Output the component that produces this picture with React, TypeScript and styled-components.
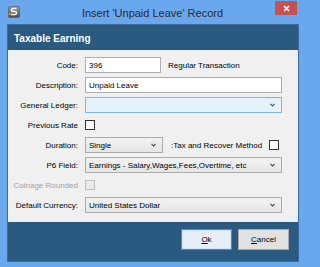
import React from "react";
import styled, { createGlobalStyle } from "styled-components";

const Global = createGlobalStyle`
  html, body { margin: 0; padding: 0; background: #69a8ec; }
  * { box-sizing: border-box; }
`;

const Window = styled.div`
  width: 305px;
  height: 267px;
  background: #69a8ec;
  display: flex;
  flex-direction: column;
  font-family: "Liberation Sans", Arial, sans-serif;
`;

const TitleBar = styled.div`
  height: 24px;
  display: grid;
  grid-template-columns: 1fr auto 1fr;
  align-items: center;
`;

const AppIcon = styled.svg`
  margin-left: 8px;
  margin-top: -1px;
  width: 12px;
  height: 12px;
`;

const Title = styled.div`
  font-size: 11px;
  color: #2b2b2b;
  white-space: nowrap;
  padding-top: 1px;
`;

const CloseButton = styled.div`
  justify-self: end;
  align-self: start;
  margin-top: 1px;
  margin-right: 8px;
  width: 22px;
  height: 14px;
  background: #c75050;
  display: flex;
  align-items: center;
  justify-content: center;
`;

const Dialog = styled.div`
  flex: 1;
  margin: 0 6px 5px 7px;
  border: 1px solid #3b6b98;
  display: flex;
  flex-direction: column;
`;

const Header = styled.div`
  height: 25px;
  background: #2a5a80;
  color: #ffffff;
  font-weight: bold;
  font-size: 10px;
  display: flex;
  align-items: center;
  padding-left: 6px;
  padding-top: 1px;
`;

const Form = styled.div`
  height: 172px;
  background: #f0f0f0;
  padding: 5px 16px 0 0;
  display: grid;
  grid-template-columns: 70px 1fr;
  grid-auto-rows: 20px;
  column-gap: 7px;
  font-size: 8px;
  align-items: center;
`;

const Label = styled.div<{ $disabled?: boolean }>`
  text-align: right;
  white-space: nowrap;
  color: ${(p) => (p.$disabled ? "#a3a3a3" : "#000")};
`;

const FieldRow = styled.div`
  display: flex;
  align-items: center;
  gap: 7px;
  height: 20px;
`;

const TextBox = styled.div<{ $w?: number }>`
  width: ${(p) => (p.$w ? `${p.$w}px` : "100%")};
  height: 16px;
  background: #fff;
  border: 1px solid #abadb3;
  display: flex;
  align-items: center;
  padding-left: 3px;
  color: #000;
  white-space: nowrap;
`;

const Combo = styled.div<{ $w?: number; $focus?: boolean }>`
  width: ${(p) => (p.$w ? `${p.$w}px` : "100%")};
  height: 16px;
  border: 1px solid ${(p) => (p.$focus ? "#7eb4ea" : "#acacac")};
  background: ${(p) =>
    p.$focus ? "#e5f1fb" : "linear-gradient(#f2f2f2, #e6e6e6)"};
  display: flex;
  align-items: center;
  justify-content: space-between;
  padding: 0 6px 0 3px;
  white-space: nowrap;
  color: #000;
`;

const Check = styled.div<{ $disabled?: boolean }>`
  width: 10px;
  height: 10px;
  flex: none;
  border: 1px solid ${(p) => (p.$disabled ? "#c2c2c2" : "#333")};
  background: ${(p) => (p.$disabled ? "#e9e9e9" : "#fff")};
`;

const Plain = styled.span`
  white-space: nowrap;
`;

const Footer = styled.div`
  flex: 1;
  background: #2a5a80;
  display: flex;
  justify-content: flex-end;
  align-items: flex-start;
  gap: 6px;
  padding: 7px 9px 0 0;
`;

const Button = styled.div<{ $default?: boolean }>`
  width: 51px;
  height: 21px;
  font-size: 8px;
  color: #000;
  display: flex;
  align-items: center;
  justify-content: center;
  border: 1px solid ${(p) => (p.$default ? "#3c90e0" : "#acacac")};
  background: ${(p) => (p.$default ? "#e8eef6" : "#e1e1e1")};
  box-shadow: ${(p) => (p.$default ? "inset 0 0 0 1px #cfe3f7" : "none")};
  u { text-decoration: underline; }
`;

const Chevron = () => (
  <svg width="5" height="4" viewBox="0 0 5 4">
    <polyline points="0.5,0.8 2.5,3 4.5,0.8" fill="none" stroke="#444" strokeWidth="1.1" />
  </svg>
);

export default function App() {
  return (
    <>
      <Global />
      <Window>
        <TitleBar>
          <AppIcon viewBox="0 0 12 12">
            <defs>
              <linearGradient id="ig" x1="0" y1="0" x2="0" y2="1">
                <stop offset="0" stopColor="#9a9a9a" />
                <stop offset="1" stopColor="#4a4a4a" />
              </linearGradient>
            </defs>
            <rect x="0.5" y="0.5" width="11" height="11" rx="1.5" fill="url(#ig)" stroke="#555" strokeWidth="0.6" />
            <rect x="0.8" y="7.2" width="5" height="2" fill="#f0881e" />
            <path d="M8.5 2.5 H5 Q3.5 2.5 3.5 4 Q3.5 5.5 5 5.5 H7 Q8.5 5.5 8.5 7 Q8.5 8.6 7 8.6 H3.5" fill="none" stroke="#fff" strokeWidth="1.4" />
          </AppIcon>
          <Title>Insert 'Unpaid Leave' Record</Title>
          <CloseButton>
            <svg width="7" height="7" viewBox="0 0 7 7">
              <path d="M1 1 L6 6 M6 1 L1 6" stroke="#fff" strokeWidth="1.6" />
            </svg>
          </CloseButton>
        </TitleBar>
        <Dialog>
          <Header>Taxable Earning</Header>
          <Form>
            <Label>Code:</Label>
            <FieldRow>
              <TextBox $w={76}>396</TextBox>
              <Plain>Regular Transaction</Plain>
            </FieldRow>

            <Label>Description:</Label>
            <FieldRow>
              <TextBox>Unpaid Leave</TextBox>
            </FieldRow>

            <Label>General Ledger:</Label>
            <FieldRow>
              <Combo $focus>
                <span />
                <Chevron />
              </Combo>
            </FieldRow>

            <Label>Previous Rate</Label>
            <FieldRow>
              <Check />
            </FieldRow>

            <Label>Duration:</Label>
            <FieldRow>
              <Combo $w={78}>
                <span>Single</span>
                <Chevron />
              </Combo>
              <Plain style={{ marginLeft: 1 }}>:Tax and Recover Method</Plain>
              <Check />
            </FieldRow>

            <Label>P6 Field:</Label>
            <FieldRow>
              <Combo>
                <span>Earnings - Salary,Wages,Fees,Overtime, etc</span>
                <Chevron />
              </Combo>
            </FieldRow>

            <Label $disabled>Coinage Rounded</Label>
            <FieldRow>
              <Check $disabled />
            </FieldRow>

            <Label>Default Currency:</Label>
            <FieldRow>
              <Combo>
                <span>United States Dollar</span>
                <Chevron />
              </Combo>
            </FieldRow>
          </Form>
          <Footer>
            <Button $default>
              <span><u>O</u>k</span>
            </Button>
            <Button>
              <span><u>C</u>ancel</span>
            </Button>
          </Footer>
        </Dialog>
      </Window>
    </>
  );
}
